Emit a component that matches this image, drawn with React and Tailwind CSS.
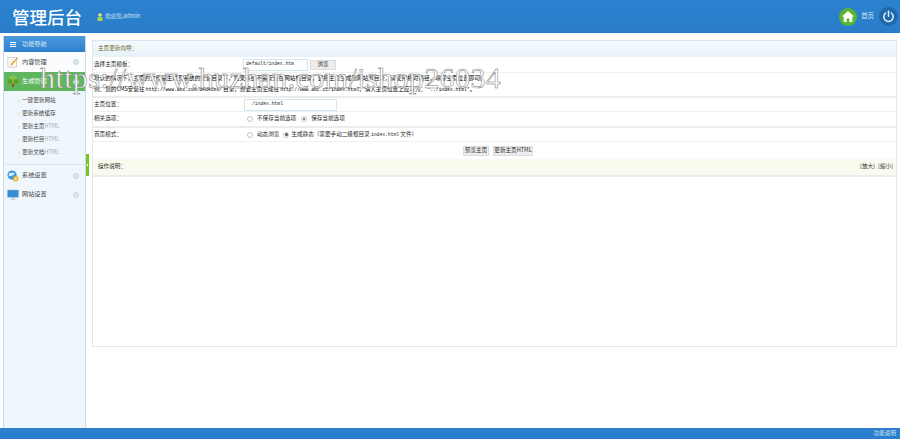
import React from 'react';
import { ChevronRight } from 'lucide-react';

const Latin = ({ children }) => (
  <span className="font-['Liberation_Mono'] text-[4.7px]">{children}</span>
);

const Chevron = () => (
  <span className="w-[6px] h-[6px] rounded-full bg-[#dbe6ee] border border-[#c6d6e2]" />
);

const NotebookIcon = () => (
  <svg width="12" height="12" viewBox="0 0 13 13">
    <rect x="1" y="1.5" width="9.5" height="10.5" fill="#fff" stroke="#b9b9b9" strokeWidth="0.7" />
    <path d="M3 4h5M3 6h4M3 8h3" stroke="#c9c9c9" strokeWidth="0.6" />
    <path d="M3.5 9.5 11 1.5l1 1-7 8z" fill="#f0a030" />
  </svg>
);

const TreeIcon = () => (
  <svg width="12" height="13" viewBox="0 0 12 13">
    <rect x="5" y="7.5" width="2" height="4.5" fill="#8a5a22" />
    <circle cx="6" cy="4.5" r="4" fill="#8bc34a" />
    <circle cx="3" cy="6.5" r="2.5" fill="#5d9e25" />
    <circle cx="9" cy="6.5" r="2.5" fill="#5d9e25" />
  </svg>
);

const GlobeIcon = () => (
  <svg width="12" height="12" viewBox="0 0 13 13">
    <circle cx="5.5" cy="5.5" r="5" fill="#3f9bd8" />
    <path d="M2 4c2-2 3 0 5-1s1 3-1 3-2 2-4 0z" fill="#d6eefa" />
    <circle cx="9.5" cy="9.5" r="3" fill="#f0b429" />
    <circle cx="9.5" cy="9.5" r="1" fill="#fff" />
  </svg>
);

const MonitorIcon = () => (
  <svg width="12" height="12" viewBox="0 0 13 13">
    <rect x="0.5" y="1" width="12" height="8" rx="0.6" fill="#2f8fdc" stroke="#9fb3c2" strokeWidth="0.5" />
    <rect x="5" y="9" width="3" height="2" fill="#b9c5cd" />
    <rect x="3" y="11" width="7" height="1" fill="#d0d8de" />
  </svg>
);

const UserIcon = () => (
  <svg width="6" height="8" viewBox="0 0 6 8">
    <circle cx="3" cy="2" r="1.8" fill="#f4d98a" />
    <path d="M.5 8V5.5C.5 4.4 1.5 4 3 4s2.5.4 2.5 1.5V8z" fill="#a6d94a" />
  </svg>
);

const Row = ({ label, children, className = '' }) => (
  <div className={`flex items-center pl-px ${className}`}>
    <span className="w-[149px] shrink-0">{label}</span>
    {children}
  </div>
);

const Radio = ({ checked }) => (
  <span className="w-[6px] h-[6px] rounded-full border border-[#c4c4c4] bg-white flex items-center justify-center shrink-0">
    {checked && <span className="w-[2.5px] h-[2.5px] rounded-full bg-[#555]" />}
  </span>
);

const SideRow = ({ icon, label, className = '' }) => (
  <div className={`flex items-center pl-[3px] pr-[6px] text-[6.2px] ${className}`}>
    <span className="w-[12px] flex justify-center">{icon}</span>
    <span className="ml-[3px] flex-1">{label}</span>
    <Chevron />
  </div>
);

export default function App() {
  const subMenu = [
    ['一键更新网站', ''],
    ['更新系统缓存', ''],
    ['更新主页', 'HTML'],
    ['更新栏目', 'HTML'],
    ['更新文档', 'HTML'],
  ];

  return (
    <div className="relative h-[439px] w-[900px] overflow-hidden flex flex-col bg-white text-[5.6px] leading-none text-[#2a2a2a] font-['Noto_Sans_CJK_SC',sans-serif]">
      <header className="h-[33px] shrink-0 flex items-center bg-gradient-to-b from-[#2b82cf] to-[#2a7dc9] pl-3 pr-[2px]">
        <span className="text-[17.5px] font-medium text-white w-[85px]">管理后台</span>
        <UserIcon />
        <span className="ml-[2px] text-[#cfe3f4]">欢迎您,admin</span>
        <span className="ml-auto w-[18px] h-[18px] rounded-full bg-[#5cb531] flex items-center justify-center">
          <svg width="12" height="11" viewBox="0 0 12 11">
            <path d="M6 0 0 5.5h1.7V11h3V7.5h2.6V11h3V5.5H12z" fill="#fff" />
          </svg>
        </span>
        <span className="ml-[4px] text-[#d5e7f6] text-[6.4px]">首页</span>
        <span className="ml-[5px] w-[19px] h-[19px] rounded-full bg-[#1f69ab] flex items-center justify-center">
          <svg width="13" height="13" viewBox="0 0 13 13" fill="none" stroke="#e6f2fb" strokeWidth="1.5" strokeLinecap="round">
            <path d="M6.5 1.2v5" />
            <path d="M3.6 3a4.7 4.7 0 1 0 5.8 0" />
          </svg>
        </span>
      </header>

      <div className="flex-1 flex min-h-0">
        <aside className="w-[86px] shrink-0 pl-[3px] pt-[3px]">
          <div className="h-full bg-[#f0f7fc] border-l border-r border-[#c5dcec] text-[#444]">
            <div className="h-[16px] flex items-center pl-[6px] bg-gradient-to-b from-[#4b9ae0] to-[#2f80cc] text-[#d3e6f6] text-[6.2px]">
              <span className="flex flex-col gap-[1px] w-[6px] mr-[6px]">
                <span className="h-[1px] bg-white" />
                <span className="h-[1px] bg-white" />
                <span className="h-[1px] bg-white" />
              </span>
              功能导航
            </div>
            <SideRow icon={<NotebookIcon />} label="内容管理" className="h-[20px] bg-[#fafcfe]" />
            <SideRow icon={<TreeIcon />} label="生成管理" className="h-[19px] bg-[#5fb65f] text-white" />
            <ul className="pt-[3px] pb-[5px] border-b border-[#d9e6ef]">
              {subMenu.map(([name, suffix]) => (
                <li key={name} className="h-[13px] flex items-center pl-[13px]">
                  <ChevronRight size={4} className="text-[#888] mr-[1px]" />
                  {name}
                  <span className="text-[#aaa]">{suffix}</span>
                </li>
              ))}
            </ul>
            <SideRow icon={<GlobeIcon />} label="系统设置" className="h-[19px] mt-[1px]" />
            <SideRow icon={<MonitorIcon />} label="网站设置" className="h-[19px]" />
          </div>
        </aside>

        <div className="w-[6px] shrink-0 pt-[121px]">
          <div className="w-[3px] h-[22px] bg-[#76c61d] flex items-center justify-center">
            <span className="w-[1px] h-[2px] bg-white" />
          </div>
        </div>

        <main className="flex-1 pt-[7px] pr-[3px] min-w-0">
          <div className="h-[307px] border border-[#e2e9ee] border-t-[#d8e6f1]">
            <div className="h-[16px] flex items-center pl-[5px] bg-gradient-to-b from-[#f6fafd] to-[#e6f1f9] text-[#6a6a1e]">
              主页更新向导：
            </div>
            <Row label="选择主页模板：" className="h-[16px] border-b border-[#eef1f1]">
              <span className="w-[65px] h-[12px] border border-[#d5e5f0] flex items-center pl-[2px]">
                <Latin>default/index.htm</Latin>
              </span>
              <span className="ml-[2px] w-[26px] h-[10px] bg-[#eeeeee] border border-[#dcdcdc] flex items-center justify-center">
                浏览
              </span>
            </Row>
            <div className="h-[25px] flex flex-col justify-center gap-[6px] pl-px border-b-2 border-[#ececec] text-black whitespace-nowrap">
              <p>
                默认的情况下，主页的文件是生成到系统的安装目录下，如果系统不是安装在网站根目录，要把主页生成到网站根目录，请使用相对路径，填写主页位置即可。
              </p>
              <p>
                例：您的CMS安装在 <Latin>http://www.abc.com/dedecms/</Latin> 目录，想要主页生成在 <Latin>http://www.abc.cc/index.html</Latin>，请入主页位置上应写为： <Latin>"../index.html"</Latin>。
              </p>
            </div>
            <Row label="主页位置：" className="h-[14px] border-b border-[#eef1f1]">
              <span className="ml-px w-[93px] h-[12px] border border-[#d5e5f0] flex items-center pl-[7px]">
                <Latin>/index.html</Latin>
              </span>
            </Row>
            <Row label="相关选项：" className="h-[16px] border-b-2 border-[#ececec]">
              <span className="ml-[4px]"><Radio /></span>
              <span className="ml-[4px] mr-[5px]">不保存当前选项</span>
              <Radio checked />
              <span className="ml-[4px]">保存当前选项</span>
            </Row>
            <Row label="首页模式：" className="h-[14px] border-b border-[#eef1f1]">
              <span className="ml-[4px]"><Radio /></span>
              <span className="ml-[4px] mr-[4px]">动态浏览</span>
              <Radio checked />
              <span className="ml-[2px]">生成静态（需要手动二级根目录 <Latin>index.html</Latin> 文件）</span>
            </Row>
            <div className="h-[17px] flex items-center pl-[370px] gap-[4px]">
              <span className="w-[26px] h-[10px] bg-[#eeeeee] border border-[#dcdcdc] flex items-center justify-center">
                预览主页
              </span>
              <span className="w-[40px] h-[10px] bg-[#eeeeee] border border-[#dcdcdc] flex items-center justify-center">
                更新主页HTML
              </span>
            </div>
            <div className="h-[18px] flex items-center justify-between pl-[5px] pr-[3px] bg-[#fafbef] border-b-2 border-[#ececec]">
              <span>操作说明：</span>
              <span className="flex gap-[3px]">
                <span>[放大]</span>
                <span>[缩小]</span>
              </span>
            </div>
          </div>
        </main>
      </div>

      <footer className="h-[11px] shrink-0 flex items-center justify-end pr-[4px] bg-[#2b7fcc] text-[#cfe3f4]">
        功能说明
      </footer>

      <div className="absolute left-[40px] top-[63px] whitespace-nowrap font-['Liberation_Serif',serif] text-[30px] leading-none tracking-[0.4px] text-white/90 [-webkit-text-stroke:0.5px_#777777]">
        https://www.huzhan.com/ishop26034
      </div>
    </div>
  );
}
